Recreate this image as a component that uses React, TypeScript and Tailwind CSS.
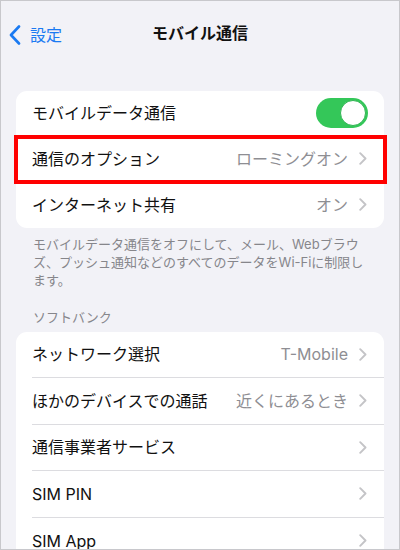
import { ReactNode } from 'react'

function Chevron() {
  return (
    <svg width="8" height="13" viewBox="0 0 8 13" fill="none" className="ml-[11px] shrink-0">
      <path d="M1.2 1.2L6.5 6.5L1.2 11.8" stroke="#c4c4c7" strokeWidth="1.9" strokeLinecap="round" strokeLinejoin="round" />
    </svg>
  )
}

function Row({
  label,
  detail,
  right,
  last,
  tall,
}: {
  label: string
  detail?: string
  right?: ReactNode
  last?: boolean
  tall?: boolean
}) {
  return (
    <div className="pl-4">
      <div
        className={
          'flex items-center pr-[17px] ' +
          (tall ? 'h-[46.5px] ' : 'h-[45.5px] ') +
          (last ? '' : 'border-b border-[#dcdce0]')
        }
      >
        <span className="flex-1 text-[16px] text-[#111] whitespace-nowrap">{label}</span>
        {right ?? (
          <>
            {detail && <span className="text-[16px] text-[#8e8e93] whitespace-nowrap">{detail}</span>}
            <Chevron />
          </>
        )}
      </div>
    </div>
  )
}

function Toggle() {
  return (
    <div className="mr-[-1px] flex h-[30px] w-[52px] items-center justify-end rounded-full bg-[#34c759] p-[2px]">
      <div className="h-[26px] w-[26px] rounded-full border border-[#2fb552] bg-white" />
    </div>
  )
}

export default function App() {
  return (
    <div className='relative h-[550px] w-[400px] overflow-hidden border border-[#c8c8cc] bg-[#f2f2f7] font-["Inter","Noto_Sans_CJK_JP",sans-serif]'>
      <div className="relative flex h-[63px] items-center justify-center">
        <div className="absolute left-[8px] top-[22px] flex items-center text-[#1a7af2]">
          <svg width="12" height="20" viewBox="0 0 12 20" fill="none">
            <path d="M10 1.5L2 10L10 18.5" stroke="#1a7af2" strokeWidth="2.6" strokeLinecap="round" strokeLinejoin="round" />
          </svg>
          <span className="ml-[9px] text-[16px]">設定</span>
        </div>
        <h1 className="text-[16px] font-bold text-[#111]">モバイル通信</h1>
      </div>

      <div className="relative mx-[15px] mt-[27px] rounded-[11px] bg-white">
        <Row label="モバイルデータ通信" right={<Toggle />} />
        <Row label="通信のオプション" detail="ローミングオン" />
        <Row label="インターネット共有" detail="オン" last />
        <div className="absolute -left-[2.5px] -right-[2.5px] top-[44px] h-[48.5px] border-4 border-[#ff0000]" />
      </div>

      <p className="px-[32px] pt-[7px] text-[13px] leading-[18px] text-[#86868b]">
        モバイルデータ通信をオフにして、メール、Webブラウ
        <br />
        ズ、プッシュ通知などのすべてのデータをWi-Fiに制限し
        <br />
        ます。
      </p>

      <p className="mt-[19px] px-[32px] text-[13px] leading-[18px] text-[#86868b]">ソフトバンク</p>

      <div className="mx-[15px] mt-[6px] rounded-[11px] bg-white">
        <Row label="ネットワーク選択" detail="T-Mobile" tall />
        <Row label="ほかのデバイスでの通話" detail="近くにあるとき" tall />
        <Row label="通信事業者サービス" tall />
        <Row label="SIM PIN" tall />
        <Row label="SIM App" tall last />
      </div>
    </div>
  )
}
